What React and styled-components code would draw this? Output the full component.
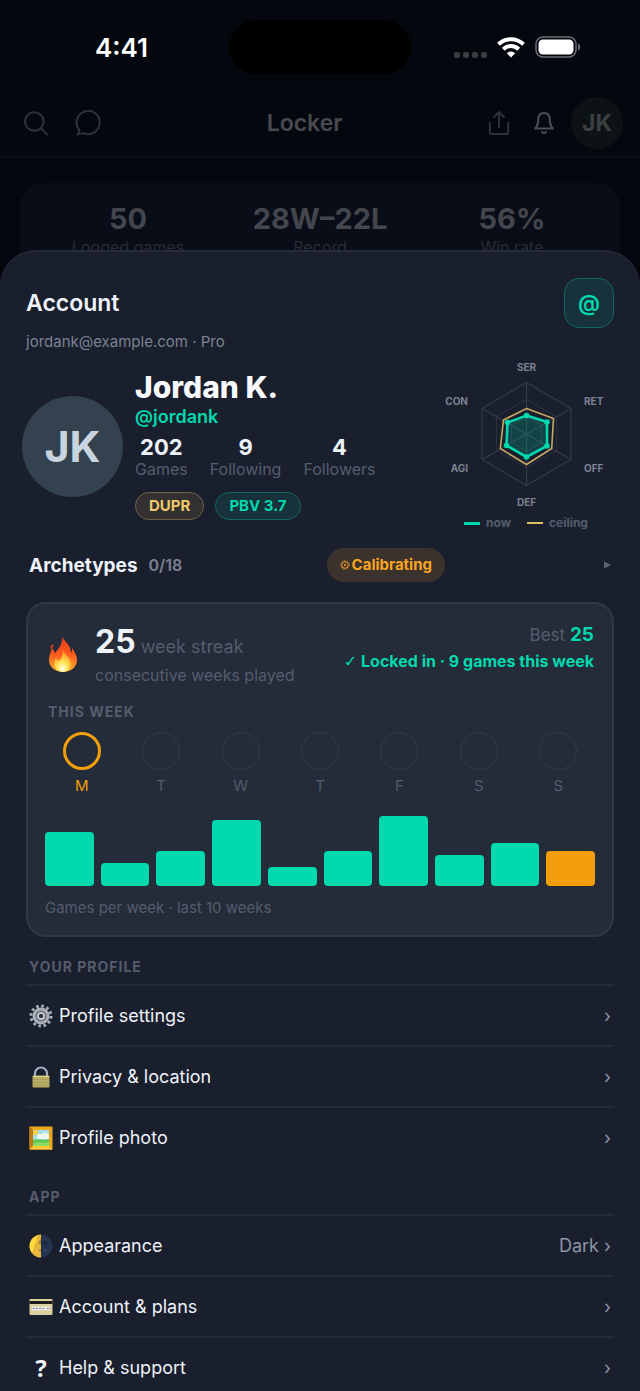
import React from 'react';
import styled, { createGlobalStyle } from 'styled-components';

const GlobalStyle = createGlobalStyle`
	*, *::before { box-sizing: border-box; }
	body {
		margin: 0;
		background: #04070e;
		color: #eef2f9;
		font-family: Inter, "Liberation Sans", sans-serif;
	}
	button, h1, h2, h3, p, ul, dl, dd, dt {
		margin: 0;
		padding: 0;
		font: inherit;
		color: inherit;
	}
	button { border: 0; background: none; cursor: pointer; }
	ul { list-style: none; }
	svg { display: block; flex: none; }
`

const week = ['M', 'T', 'W', 'T', 'F', 'S', 'S']
const games = [54, 23, 35, 66, 19, 35, 70, 31, 43, 35]

const SearchIcon = () => (
	<LineSvg width="26" height="26" viewBox="0 0 26 26">
		<circle cx="11.300" cy="11.500" r="9.300" />
		<path d="M18 18.500l6 5.800" />
	</LineSvg>
)

const ChatIcon = () => (
	<LineSvg width="26" height="26" viewBox="0 0 26 26">
		<path d="M4.600 20.300A11.600 11.600 0 1 1 8.500 23.100L2.900 24.400z" />
	</LineSvg>
)

const ShareIcon = () => (
	<LineSvg width="29" height="26" viewBox="0 0 29 26">
		<path d="M11 2v15M6 7l5-5 5 5" />
		<path d="M1.800 12.500V22a2 2 0 0 0 2 2h14.400a2 2 0 0 0 2-2v-9.500" />
	</LineSvg>
)

const BellIcon = () => (
	<LineSvg width="20" height="24" viewBox="0 0 20 24">
		<path d="M1.200 17.500h17.600c-2.300-2.300-3-4.500-3-8.500 0-4.500-2.300-7-5.800-7S4.200 4.500 4.200 9c0 4-.7 6.200-3 8.500z" />
		<path d="M8 20.800a2.200 2.200 0 0 0 4 0" />
	</LineSvg>
)

const Wifi = () => (
	<svg width="28" height="22" viewBox="0 0 28 22" fill="none" stroke="#fff" strokeWidth="4">
		<path d="M1.500 8.200a18 18 0 0 1 25 0" />
		<path d="M6.300 13.200a11 11 0 0 1 15.400 0" />
		<path d="M14 21.500l-4.200-4.300a6 6 0 0 1 8.400 0z" fill="#fff" stroke="none" />
	</svg>
)

const Battery = () => (
	<svg width="46" height="22" viewBox="0 0 46 22">
		<rect x="1" y="1" width="40" height="20" rx="7" fill="none" stroke="#6b6d72" strokeWidth="1.500" />
		<rect x="3.500" y="3.500" width="35" height="15" rx="4.500" fill="#fff" />
		<path d="M43 7.500c3 1 3 6 0 7z" fill="#6b6d72" />
	</svg>
)

const Fire = () => (
	<svg width="30" height="38" viewBox="0 0 30 38">
		<defs>
			<linearGradient id="flame" x1="0" y1="0" x2="0" y2="1">
				<stop offset="0" stopColor="#e8391c" />
				<stop offset=".5" stopColor="#fb5a1e" />
				<stop offset="1" stopColor="#ffb02e" />
			</linearGradient>
			<radialGradient id="core" cx=".5" cy=".85" r=".7">
				<stop offset="0" stopColor="#fffef0" />
				<stop offset=".4" stopColor="#ffe75a" />
				<stop offset="1" stopColor="#ff9a26" />
			</radialGradient>
		</defs>
		<path d="M14 1c1 5 9 8 9 17 1-1 1-3 1-5 3 4 5 8 5 12 0 7-6 12-14 12S1 32 1 25c0-5 2-8 3-12 1 1 2 3 3 5 4-5 8-9 7-17z" fill="url(#flame)" />
		<path d="M5 9c-2 1-3 3-2 5 2-1 3-3 2-5z" fill="#e8391c" />
		<path d="M15 14c0 5 8 8 8 15 0 5-4 8-8 8s-9-3-9-8c0-3 1-4 2-6 1 2 2 3 3 3 3-3 4-7 4-12z" fill="url(#core)" />
	</svg>
)

const GearPic = () => (
	<svg width="24" height="24" viewBox="0 0 24 24">
		<circle cx="12" cy="12" r="10" fill="none" stroke="#a9afb8" strokeWidth="3" strokeDasharray="2.600 2.636" />
		<circle cx="12" cy="12" r="7" fill="#6d737e" stroke="#aab0ba" strokeWidth="3" />
		<circle cx="12" cy="12" r="3" fill="#30353f" stroke="#d7dbe2" strokeWidth="1.500" />
	</svg>
)

const LockPic = () => (
	<svg width="24" height="24" viewBox="0 0 24 24">
		<path d="M6 12V8.500a6 6 0 0 1 12 0V12" fill="none" stroke="#a3b1c6" strokeWidth="2.200" />
		<rect x="3.500" y="10.500" width="17" height="12" rx="1" fill="#b8ad66" />
		<path d="M4 14.500h16M4 17.500h16M4 20.500h16" stroke="#aca059" />
		<path d="M4 11.500h16" stroke="#e0d89a" />
	</svg>
)

const FramePic = () => (
	<svg width="24" height="24" viewBox="0 0 24 24">
		<rect x=".5" y=".5" width="23" height="23" fill="#e9a91f" />
		<path d="M.5.5l4 4v15l-4 4z" fill="#c17a10" />
		<path d="M.5 23.500l4-4h15l4 4z" fill="#f9c93a" />
		<rect x="4" y="4" width="16" height="16" fill="#a5dfea" />
		<path d="M8 10c2-4 4-1 5-2 2-2 5-2 7 1v4H8z" fill="#eef6f4" />
		<circle cx="6.500" cy="6.500" r="2.500" fill="#f8d13b" />
		<path d="M4 14c5-2 10 1 16-1v7H4z" fill="#5fc554" />
		<path d="M4 18c6-3 9 0 16-2v4H4z" fill="#8edb62" />
	</svg>
)

const MoonPic = () => (
	<svg width="24" height="24" viewBox="0 0 24 24">
		<circle cx="12" cy="12" r="11.500" fill="#25334f" />
		<path d="M12 .5a11.500 11.500 0 0 0 0 23z" fill="#e9b53a" />
		<path d="M8 2a11 11 0 0 0-5 17c2-2 1-6 3-9s1-5 2-8z" fill="#ffdb3c" />
		<path d="M12 5c-2 2-3 4-2 5s2 1 2 1zM12 15l-3 1 3 2z" fill="#a88332" />
		<circle cx="16" cy="9" r="2.500" fill="#1c2840" />
		<circle cx="16" cy="16" r="1.500" fill="#33435f" />
	</svg>
)

const PlanPic = () => (
	<svg width="24" height="24" viewBox="0 0 24 24">
		<rect x=".5" y="4" width="23" height="16" rx="1" fill="#d9cf9f" />
		<path d="M.5 7.500h23" stroke="#1b1a18" strokeWidth="3" />
		<rect x="3" y="11.500" width="18" height="4" fill="#e9e6dc" />
		<path d="M4 13.500h12M18 13.500h2" stroke="#7d8db8" strokeDasharray="2 1" />
	</svg>
)

const Cog = () => (
	<svg width="10" height="10" viewBox="0 0 10 10" fill="none" stroke="#f9a51f">
		<circle cx="5" cy="5" r="3.300" />
		<circle cx="5" cy="5" r="1" fill="#f9a51f" stroke="none" />
		<circle cx="5" cy="5" r="4.400" strokeDasharray="1 1.760" />
	</svg>
)

const Radar = () => (
	<RadarSvg viewBox="-1 0 180 160" width="180" height="160">
		<g fill="none" stroke="#353a48" strokeWidth="1.200">
			<path d="M91.500 27.500l44.500 26v51l-44.500 26-44.500-26v-51z" />
			<path d="M91.500 44.500l30 17v34l-30 17-30-17v-34z" stroke="#2a2f3e" />
			<path d="M91.500 62l15 8.500v17l-15 8.500-15-8.500v-17z" stroke="#2a2f3e" />
			<path d="M91.500 27.500v103M47 53.500l89 51M136 53.500l-89 51" />
		</g>
		<path d="M91.500 53.500l27 10-1.800 30-25.200 16-26.200-16 3.200-28.500z" fill="none" stroke="#c6a862" strokeWidth="1.600" />
		<path d="M91.500 60.500l20.500 6.500v24l-20.500 11-20-11.500 1-23z" fill="#00d8ae" fillOpacity=".2" stroke="#00d8ae" strokeWidth="2.600" />
		<g fill="#00d8ae">
			<circle cx="91.500" cy="60.500" r="2.800" />
			<circle cx="112" cy="67" r="2.800" />
			<circle cx="112" cy="91" r="2.800" />
			<circle cx="91.500" cy="102" r="2.800" />
			<circle cx="71.500" cy="90.500" r="2.800" />
			<circle cx="72.500" cy="67.500" r="2.800" />
		</g>
		<text x="91.500" y="16" textAnchor="middle">SER</text>
		<text x="149" y="50">RET</text>
		<text x="149" y="117">OFF</text>
		<text x="91.500" y="151" textAnchor="middle">DEF</text>
		<text x="33" y="117" textAnchor="end">AGI</text>
		<text x="33" y="50" textAnchor="end">CON</text>
	</RadarSvg>
)

const MenuItem = ({ pic, label, value }) => (
	<li>
		<MenuButton>
			<Pic>{pic}</Pic>
			<span>{label}</span>
			<Value>{value} ›</Value>
		</MenuButton>
	</li>
)

class App extends React.Component {
	render() {
		return (
			<Screen>
				<GlobalStyle />
				<StatusBar>
					<Time>4:41</Time>
					<Island />
					<Signals>
						<Dots><i /><i /><i /><i /></Dots>
						<Wifi />
						<Battery />
					</Signals>
				</StatusBar>
				<TopBar>
					<Tools $gap={26}>
						<IconButton aria-label="Search"><SearchIcon /></IconButton>
						<IconButton aria-label="Messages"><ChatIcon /></IconButton>
					</Tools>
					<PageTitle>Locker</PageTitle>
					<Tools $gap={17}>
						<IconButton aria-label="Share"><ShareIcon /></IconButton>
						<IconButton aria-label="Notifications" $bright><BellIcon /></IconButton>
						<SmallAvatar>JK</SmallAvatar>
					</Tools>
				</TopBar>
				<Summary>
					<div><dd>50</dd><dt>Logged games</dt></div>
					<div><dd>28W–22L</dd><dt>Record</dt></div>
					<div><dd>56%</dd><dt>Win rate</dt></div>
				</Summary>

				<Sheet>
					<SheetHead>
						<SheetTitle>Account</SheetTitle>
						<HandleButton aria-label="Handle">@</HandleButton>
					</SheetHead>
					<Email>jordank@example.com · Pro</Email>

					<Profile>
						<Avatar>JK</Avatar>
						<Person>
							<Name>Jordan K.</Name>
							<Handle>@jordank</Handle>
							<Counts>
								<div><dd>202</dd><dt>Games</dt></div>
								<div><dd>9</dd><dt>Following</dt></div>
								<div><dd>4</dd><dt>Followers</dt></div>
							</Counts>
							<Chips>
								<Chip $color="#f0c968" $line="#6f6248" $bg="#333031">DUPR</Chip>
								<Chip $color="#00d8ae" $line="#12665f" $bg="#18323b">PBV 3.7</Chip>
							</Chips>
						</Person>
						<Skills>
							<Radar />
							<Legend>
								<Key $color="#00d8ae" $size={3}>now</Key>
								<Key $color="#e0bd66" $size={2}>ceiling</Key>
							</Legend>
						</Skills>
					</Profile>

					<Archetypes>
						<ArchTitle>Archetypes</ArchTitle>
						<ArchCount>0/18</ArchCount>
						<Calibrating><Cog />Calibrating</Calibrating>
						<svg width="8" height="8" viewBox="0 0 8 8"><path d="M0 .5l7 3.500-7 3.500z" fill="#5d6474" /></svg>
					</Archetypes>

					<Card>
						<Streak>
							<Fire />
							<StreakText>
								<p><strong>25</strong> week streak</p>
								<p>consecutive weeks played</p>
							</StreakText>
							<Best>
								<p>Best <strong>25</strong></p>
								<Locked><Tick>✓</Tick> Locked in · 9 games this week</Locked>
							</Best>
						</Streak>
						<WeekLabel>THIS WEEK</WeekLabel>
						<Week>
							{week.map((d, i) => <Day key={i} $today={i === 0}>{d}</Day>)}
						</Week>
						<Bars>
							{games.map((h, i) => <Bar key={i} $now={i === 9} style={{ height: h }} />)}
						</Bars>
						<Caption>Games per week · last 10 weeks</Caption>
					</Card>

					<Section>
						<GroupTitle>YOUR PROFILE</GroupTitle>
						<ul>
							<MenuItem pic={<GearPic />} label="Profile settings" />
							<MenuItem pic={<LockPic />} label="Privacy & location" />
							<MenuItem pic={<FramePic />} label="Profile photo" />
						</ul>
					</Section>
					<Section>
						<GroupTitle>APP</GroupTitle>
						<ul>
							<MenuItem pic={<MoonPic />} label="Appearance" value="Dark" />
							<MenuItem pic={<PlanPic />} label="Account & plans" />
							<MenuItem pic={<Mark>?</Mark>} label="Help & support" />
						</ul>
					</Section>
				</Sheet>
			</Screen>
		)
	}
}

const Screen = styled.main`
	display: flex;
	flex-direction: column;
	height: 100vh;
	overflow: hidden;
`
const StatusBar = styled.div`
	display: grid;
	grid-template-columns: 1fr 182px 1fr;
	align-items: center;
	flex: none;
	height: 94px;
`
const Time = styled.span`
	padding-left: 14px;
	text-align: center;
	font-size: 26px;
	font-weight: 600;
	color: #fff;
`
const Island = styled.div`
	height: 54px;
	border-radius: 27px;
	background: #000;
`
const Signals = styled.div`
	display: flex;
	justify-content: flex-end;
	gap: 10px;
	padding-right: 59px;
`
const Dots = styled.div`
	display: flex;
	align-items: flex-end;
	gap: 3px;
	i {
		width: 6px;
		height: 6px;
		border-radius: 2px;
		background: #3b3d43;
	}
`
const LineSvg = styled.svg`
	fill: none;
	stroke: currentColor;
	stroke-width: 2;
	stroke-linecap: round;
	stroke-linejoin: round;
`
const TopBar = styled.header`
	display: flex;
	align-items: center;
	flex: none;
	height: 64px;
	padding: 0 17px 4px 23px;
	border-bottom: 2px solid #0a0d15;
`
const Tools = styled.div`
	display: flex;
	align-items: center;
	gap: ${p => p.$gap}px;
`
const IconButton = styled.button`
	color: ${p => p.$bright ? '#4b4d55' : '#2f323b'};
`
const PageTitle = styled.h1`
	flex: 1;
	padding-left: 20px;
	text-align: center;
	font-size: 23px;
	font-weight: 600;
	color: #484a50;
`
const SmallAvatar = styled.div`
	display: flex;
	align-items: center;
	justify-content: center;
	width: 52px;
	height: 52px;
	border-radius: 50%;
	background: #0d1215;
	font-size: 23px;
	font-weight: 700;
	color: #3c4042;
`
const Summary = styled.dl`
	display: grid;
	grid-template-columns: repeat(3, 1fr);
	flex: none;
	margin: 25px 20px 0;
	padding: 18px 12px;
	height: 100px;
	border-radius: 24px;
	background: #090d17;
	text-align: center;
	div {
		display: flex;
		flex-direction: column;
	}
	dd {
		font-size: 29px;
		line-height: 36px;
		font-weight: 700;
		color: #44464e;
	}
	dt {
		font-size: 16px;
		line-height: 20px;
		color: #272b35;
	}
`
const Sheet = styled.section`
	position: relative;
	flex: none;
	margin-top: -33px;
	padding: 26px 26px 0;
	border-top: 2px solid #252b39;
	border-radius: 36px 36px 0 0;
	background: #1a1f2d;
`
const SheetHead = styled.div`
	display: flex;
	align-items: center;
	justify-content: space-between;
`
const SheetTitle = styled.h2`
	font-size: 23px;
	font-weight: 600;
`
const HandleButton = styled.button`
	width: 50px;
	height: 50px;
	border: 1px solid #12665f;
	border-radius: 15px;
	background: #18323b;
	font-size: 22px;
	font-weight: 600;
	color: #00d8ae;
`
const Email = styled.p`
	margin-top: 4px;
	font-size: 15px;
	line-height: 20px;
	color: #7b8292;
`
const Profile = styled.div`
	display: flex;
	align-items: center;
	margin: 3px 0 0 -4px;
`
const Avatar = styled.div`
	display: flex;
	align-items: center;
	justify-content: center;
	flex: none;
	width: 101px;
	height: 101px;
	margin-top: 6px;
	border-radius: 50%;
	background: #33424e;
	font-size: 43px;
	font-weight: 700;
	color: #c8d4df;
`
const Person = styled.div`
	flex: 1;
	padding: 10px 0 4px 12px;
`
const Name = styled.h3`
	font-size: 30px;
	line-height: 31px;
	font-weight: 800;
	color: #f7f9fc;
`
const Handle = styled.p`
	font-size: 18px;
	line-height: 28px;
	font-weight: 600;
	color: #00d8ae;
`
const Counts = styled.dl`
	display: flex;
	gap: 22px;
	margin: 4px 0 13px;
	text-align: center;
	dd {
		font-size: 22px;
		line-height: 24px;
		font-weight: 700;
	}
	dt {
		font-size: 16px;
		line-height: 20px;
		color: #555d6d;
	}
	div {
		display: flex;
		flex-direction: column;
	}
`
const Chips = styled.div`
	display: flex;
	gap: 11px;
`
const Chip = styled.span`
	padding: 0 13px;
	border: 1px solid ${p => p.$line};
	border-radius: 14px;
	background: ${p => p.$bg};
	font-size: 15px;
	line-height: 26px;
	font-weight: 700;
	color: ${p => p.$color};
`
const Skills = styled.div`
	display: flex;
	flex-direction: column;
	align-items: center;
`
const RadarSvg = styled.svg`
	text {
		font-size: 10px;
		font-weight: 700;
		fill: #7b8292;
	}
`
const Legend = styled.div`
	display: flex;
	gap: 16px;
	padding-left: 4px;
`
const Key = styled.span`
	display: flex;
	align-items: center;
	gap: 6px;
	font-size: 12px;
	line-height: 16px;
	font-weight: 700;
	color: #555d6d;
	&::before {
		content: '';
		width: 16px;
		height: ${p => p.$size}px;
		background: ${p => p.$color};
	}
`
const Archetypes = styled.div`
	display: flex;
	align-items: center;
	margin: 17px 0 20px;
	padding: 0 2px 0 3px;
`
const ArchTitle = styled.h3`
	font-size: 19px;
	font-weight: 700;
`
const ArchCount = styled.span`
	flex: 1;
	margin-left: 11px;
	font-size: 16px;
	font-weight: 600;
	color: #7b8292;
`
const Calibrating = styled.span`
	display: flex;
	align-items: center;
	gap: 2px;
	margin-right: 159px;
	padding: 0 13px;
	border-radius: 17px;
	background: #3b322e;
	font-size: 15px;
	line-height: 34px;
	font-weight: 700;
	color: #f9a51f;
`
const Card = styled.section`
	padding: 16px 14px 17px;
	border: 2px solid #303746;
	border-radius: 20px;
	background: #242b39;
`
const Streak = styled.div`
	display: flex;
	padding: 2px 4px 0 6px;
	color: #555d6d;
	svg { margin-top: 13px; }
`
const StreakText = styled.div`
	flex: 1;
	padding: 2px 0 0 17px;
	font-size: 16px;
	line-height: 20px;
	p:first-child {
		font-size: 18px;
		line-height: 36px;
	}
	strong {
		font-size: 32px;
		font-weight: 700;
		color: #eef2f9;
	}
`
const Best = styled.div`
	text-align: right;
	font-size: 17px;
	line-height: 26px;
	strong {
		font-size: 19px;
		font-weight: 700;
		color: #00d8ae;
	}
`
const Locked = styled.p`
	font-size: 16px;
	font-weight: 700;
	color: #00d8ae;
`
const Tick = styled.span`
	font-family: "DejaVu Sans", sans-serif;
	font-weight: 400;
	line-height: 1;
`
const WeekLabel = styled.h3`
	padding-left: 6px;
	margin-top: 17px;
	font-size: 14px;
	line-height: 20px;
	font-weight: 700;
	letter-spacing: 1px;
	color: #555d6d;
`
const Week = styled.div`
	display: grid;
	grid-template-columns: repeat(7, 1fr);
	margin-top: 10px;
`
const Day = styled.div`
	display: flex;
	flex-direction: column;
	align-items: center;
	gap: 6px;
	font-size: 15px;
	line-height: 20px;
	color: ${p => p.$today ? '#f59e0b' : '#555d6d'};
	&::before {
		content: '';
		width: 38px;
		height: 38px;
		border: ${p => p.$today ? '3px solid #f59e0b' : '1px solid #333a48'};
		border-radius: 50%;
	}
`
const Bars = styled.div`
	display: flex;
	align-items: flex-end;
	gap: 7px;
	margin-top: 20px;
	padding: 0 3px;
`
const Bar = styled.div`
	flex: 1;
	border-radius: 4px;
	background: ${p => p.$now ? '#f59e0b' : '#00d8ae'};
`
const Caption = styled.p`
	padding: 12px 3px 0;
	font-size: 15px;
	line-height: 20px;
	color: #555d6d;
`
const Section = styled.section`
	margin-top: 20px;
`
const GroupTitle = styled.h3`
	padding: 0 3px 7px;
	font-size: 14px;
	line-height: 20px;
	font-weight: 700;
	letter-spacing: 1px;
	color: #555d6d;
`
const MenuButton = styled.button`
	display: flex;
	align-items: center;
	width: 100%;
	height: 61px;
	padding: 0 3px;
	border-top: 2px solid #272b39;
	font-size: 18px;
	text-align: left;
`
const Pic = styled.span`
	width: 30px;
`
const Mark = styled.span`
	display: block;
	width: 24px;
	text-align: center;
	font-family: "Noto Sans", sans-serif;
	font-size: 24px;
	line-height: 24px;
	font-weight: 700;
`
const Value = styled.span`
	margin-left: auto;
	color: #8d94a3;
`

export default App
